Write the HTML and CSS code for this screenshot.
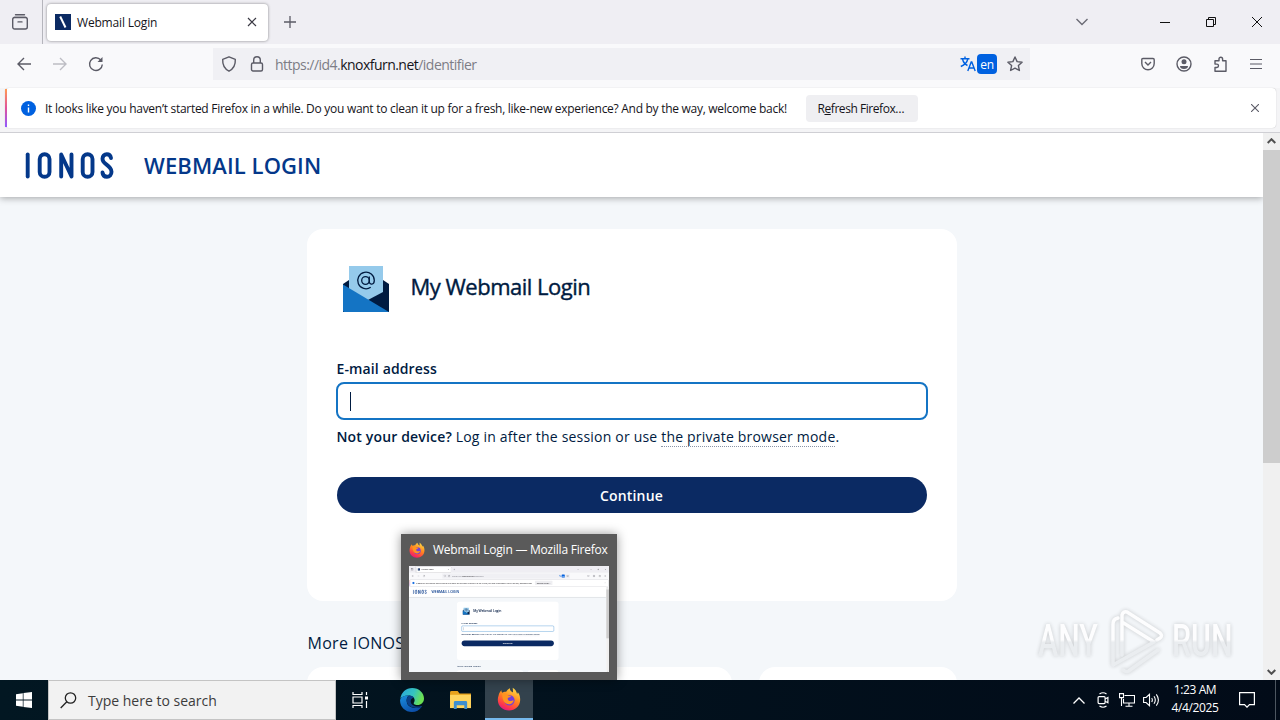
FILE: index.html
```html
<!DOCTYPE html>
<html lang="en">
<head>
  <meta charset="UTF-8">
  <meta name="viewport" content="width=device-width, initial-scale=1.0">
  <title>Webmail Login</title>
  <link rel="stylesheet" href="styles.css">
</head>
<body>
  <div class="browser" id="browser">
    <div class="tab-bar">
      <div class="firefox-view">
        <svg width="18" height="18" viewBox="0 0 18 18" fill="none" stroke="#5b5b66" stroke-width="1.4" stroke-linecap="round"><path d="M4.5 1.8h9M3 4.4h12"/><rect x="1.7" y="4.5" width="14.6" height="11.5" rx="2"/><path d="M7 8.9h4"/></svg>
      </div>
      <div class="tab">
        <svg class="favicon" width="16" height="16" viewBox="0 0 16 16"><rect width="16" height="16" fill="#0b2a63"/><path d="M5.2 2.5l5.3 11" stroke="#fff" stroke-width="2"/></svg>
        <span class="tab-title">Webmail Login</span>
        <svg width="10" height="10" viewBox="0 0 10 10" stroke="#3a3944" stroke-width="1.2"><path d="M1 1l8 8M9 1l-8 8"/></svg>
      </div>
      <svg class="new-tab" width="12" height="12" viewBox="0 0 12 12" stroke="#5b5b66" stroke-width="1.3"><path d="M6 0v12M0 6h12"/></svg>
      <div class="window-buttons">
        <svg width="12" height="8" viewBox="0 0 12 8" fill="none" stroke="#6b6b75" stroke-width="1.4"><path d="M.5 1l5.5 5.5L11.5 1"/></svg>
        <svg class="minimize" width="10" height="10" viewBox="0 0 10 10" stroke="#111"><path d="M0 5.5h10"/></svg>
        <svg class="restore" width="10" height="10" viewBox="0 0 10 10" fill="none" stroke="#111"><path d="M.5 2.5h7v7h-7zM2.5 2.5v-2h7v7h-2"/></svg>
        <svg width="10" height="10" viewBox="0 0 10 10" stroke="#111"><path d="M0 0l10 10M10 0L0 10"/></svg>
      </div>
    </div>

    <div class="nav-bar">
      <div class="nav-buttons">
        <svg width="16" height="16" viewBox="0 0 16 16" fill="none" stroke="#5b5b66" stroke-width="1.4"><path d="M15 8H2M8 2L2 8l6 6"/></svg>
        <svg width="16" height="16" viewBox="0 0 16 16" fill="none" stroke="#bdbdc4" stroke-width="1.4"><path d="M1 8h13M8 2l6 6-6 6"/></svg>
        <svg width="16" height="16" viewBox="0 0 16 16" fill="none" stroke="#5b5b66" stroke-width="1.4"><path d="M14.3 8.5A6.4 6.4 0 1 1 12.8 4"/><path d="M14.5 1v5h-5z" fill="#5b5b66" stroke="none"/></svg>
      </div>
      <div class="url-bar">
        <svg width="16" height="16" viewBox="0 0 16 16" fill="none" stroke="#5b5b66" stroke-width="1.4"><path d="M8 .8l6.3 2.5c.3 5-1.3 9.3-6.3 11.9C3 12.6 1.4 8.3 1.7 3.3z" stroke-linejoin="round"/></svg>
        <svg class="lock" width="14" height="16" viewBox="0 0 14 16" fill="none" stroke="#5b5b66" stroke-width="1.4"><rect x="1.5" y="7" width="11" height="8" rx="1.5"/><path d="M3.7 7V4a3.3 3.3 0 0 1 6.6 0v3"/></svg>
        <span class="url">https://id4.<b>knoxfurn.net</b>/identifier</span>
        <div class="translate">
          <svg width="16" height="16" viewBox="0 0 16 16" fill="none" stroke="#0061e0" stroke-width="1.4"><path d="M.5 2.7h9M5 .5v2M2.500 3c.8 3.5 3 5.5 5 6.500M7.800 3C7 6.500 4.500 9 .8 10.500M7.800 15l3.400-9h.6l3.400 9M9 12h5"/></svg>
          <span class="lang">en</span>
        </div>
        <svg width="16" height="16" viewBox="0 0 16 16" fill="none" stroke="#5b5b66" stroke-width="1.4" stroke-linejoin="round"><path d="M8 1l2.1 4.6 5 .6-3.700 3.400 1 4.900L8 12.100l-4.400 2.400 1-4.900L.9 6.200l5-.6z"/></svg>
      </div>
      <div class="toolbar-icons">
        <svg width="14" height="14" viewBox="0 0 14 14" fill="none" stroke="#5b5b66" stroke-width="1.4"><path d="M2 1.500h10q1.200 0 1.200 1.200V6.500a6.200 6.200 0 0 1-12.400 0V2.700Q.8 1.500 2 1.500zM4 5l3 3 3-3"/></svg>
        <svg width="16" height="16" viewBox="0 0 16 16" fill="none" stroke="#5b5b66" stroke-width="1.4"><circle cx="8" cy="8" r="7"/><circle cx="8" cy="5.8" r="2.5" fill="#5b5b66" stroke="none"/><path d="M4 10h8q0 3-4 3t-4-3z" fill="#5b5b66" stroke="none"/></svg>
        <svg width="16" height="16" viewBox="0 0 16 16" fill="none" stroke="#5b5b66" stroke-width="1.4" stroke-linejoin="round"><path d="M2 15.200V11.500h1.800a1.600 1.600 0 0 0 0-3.400H2V4.700h4V3a1.800 1.800 0 0 1 3.600 0v1.700H13v10.500z"/></svg>
        <svg width="12" height="12" viewBox="0 0 12 12" stroke="#5b5b66" stroke-width="1.2"><path d="M0 1.500h12M0 6h12M0 10.500h12"/></svg>
      </div>
    </div>

    <div class="notification-box">
      <div class="notification">
        <svg width="15" height="15" viewBox="0 0 15 15"><circle cx="7.5" cy="7.5" r="7.5" fill="#0061e0"/><path d="M7.5 3.5v1.500M7.500 6.500v5" stroke="#fff" stroke-width="1.4"/></svg>
        <span class="message">It looks like you haven’t started Firefox in a while. Do you want to clean it up for a fresh, like-new experience? And by the way, welcome back!</span>
        <button class="refresh">R<u>e</u>fresh Firefox…</button>
        <svg class="dismiss" width="8" height="8" viewBox="0 0 8 8" stroke="#5b5b66" stroke-width="1.1"><path d="M0 0l8 8M8 0L0 8"/></svg>
      </div>
    </div>

    <div class="viewport">
      <div class="page">
        <header class="page-header">
          <svg class="logo" width="91" height="30" viewBox="0 0 91 30" fill="none" stroke="#04388a" stroke-width="3.9" stroke-linecap="round" stroke-linejoin="round"><path d="M3.700 4.500v22"/><rect x="15.7" y="4.200" width="9.800" height="22.600" rx="4.900"/><path d="M37.200 26.500V4.500l10.300 22V4.500"/><rect x="58.700" y="4.200" width="9.800" height="22.600" rx="4.900"/><path d="M87 8c-.5-2.700-2-3.800-4.200-3.800-2.400 0-4.300 1.800-4.300 4.500 0 6 9 6.500 9 13 0 3-2 5.100-4.500 5.100s-4.300-1.500-4.500-4.300"/></svg>
          <span class="header-title">WEBMAIL LOGIN</span>
        </header>
        <main class="content">
          <section class="login-card">
            <div class="card-head">
              <svg width="46" height="46" viewBox="0 0 46 46"><path d="M0 18l6-4h34l6 4v28H0z" fill="#001b41"/><path d="M6 0h34v26L24 34.5 6 24z" fill="#95caeb"/><path d="M0 18.5L46 46H1.500Q0 46 0 44.500z" fill="#1474c4"/><g fill="none" stroke="#001b41" stroke-width="1.3"><circle cx="22.5" cy="14.5" r="3.8"/><path d="M26.3 10.5v5.200c0 3.500 5 3.200 5-1.200a8.300 8.300 0 1 0-3.600 6.800"/></g></svg>
              <h1>My Webmail Login</h1>
            </div>
            <label class="field-label">E-mail address</label>
            <div class="field"><span class="caret"></span></div>
            <p class="hint"><b>Not your device?</b> Log in after the session or use <span class="dotted">the private browser mode</span>.</p>
            <button class="continue">Continue</button>
          </section>
          <h2>More IONOS Logins</h2>
          <div class="more">
            <div class="more-card wide"></div>
            <div class="more-card"></div>
          </div>
        </main>
      </div>
      <div class="scrollbar">
        <svg width="9" height="6" viewBox="0 0 9 6" fill="none" stroke="#505050" stroke-width="2"><path d="M.7 5l3.800-3.800L8.300 5"/></svg>
        <div class="track"><div class="thumb"></div></div>
        <svg width="9" height="6" viewBox="0 0 9 6" fill="none" stroke="#505050" stroke-width="2"><path d="M.7 1l3.800 3.800L8.300 1"/></svg>
      </div>
    </div>
  </div>

  <div class="watermark">
    <span>ANY</span>
    <svg width="56" height="66" viewBox="0 0 56 66" fill="none" stroke="url(#wm)" stroke-width="3.4" stroke-linejoin="round" stroke-linecap="round">
      <defs><linearGradient id="wm" gradientUnits="userSpaceOnUse" x1="0" y1="0" x2="0" y2="66"><stop offset="0.48" stop-color="#fff"/><stop offset="0.52" stop-color="#e9ecef"/></linearGradient></defs>
      <path d="M10 10q-5 1-5 6v41L46 34 14 14v33M14 14V7q1-4 5-3l33 21q3 3 0 5l-3 2M15 62q4 3 7 0l28-20"/>
    </svg>
    <span>RUN</span>
  </div>

  <div class="task-preview">
    <div class="preview-title">
      <svg width="16" height="16" viewBox="0 0 30 30"><use href="#firefox"/></svg>
      <span>Webmail Login — Mozilla Firefox</span>
    </div>
    <div class="preview-window" id="preview"></div>
  </div>

  <div class="taskbar">
    <div class="start">
      <svg width="16" height="16" viewBox="0 0 16 16" fill="#fff"><path d="M0 2.200l6.800-1v6.400H0zM7.500 1.100L16 0v7.600H7.500zM0 8.400h6.800v6.400l-6.800-1zM7.500 8.400H16V16l-8.500-1.100z"/></svg>
    </div>
    <div class="search">
      <svg width="17" height="17" viewBox="0 0 17 17" fill="none" stroke="#222" stroke-width="1.3"><circle cx="10.500" cy="6" r="5.200"/><path d="M6.800 9.700L.7 16"/></svg>
      <span>Type here to search</span>
    </div>
    <div class="task task-view">
      <svg width="16" height="16" viewBox="0 0 16 16" fill="none" stroke="#fff" stroke-width="1.2"><path d="M1 0v2.500h9V0M1 16v-2.500h9V16M1 5h9v6H1zM14.500 0v3M14.500 9v7"/><path d="M13 4.500h3v3h-3z" fill="#fff" stroke="none"/></svg>
    </div>
    <div class="task">
      <svg width="24" height="24" viewBox="0 0 24 24">
        <defs>
          <linearGradient id="edge-top" x1="0" y1="0" x2="1" y2="0.3"><stop offset="0" stop-color="#2aa5e0"/><stop offset="0.6" stop-color="#35c4c0"/><stop offset="1" stop-color="#6be052"/></linearGradient>
          <linearGradient id="edge-bottom" x1="0" y1="0" x2="0.6" y2="1"><stop offset="0" stop-color="#1a8fe0"/><stop offset="1" stop-color="#0c4ea8"/></linearGradient>
        </defs>
        <path d="M.3 11C1 4.500 6 0 12.200 0 19 0 24 5 24 10.500c0 4-3 6.500-6.500 6.500-3 0-4.500-1.200-3.500-2.500 2-3-.5-7-5-7C4 7.500.8 9.500.3 11z" fill="url(#edge-top)"/>
        <path d="M.1 12C.8 9 4.500 7.300 9 7.500c-2 1.200-3 4-2 7.500 1.500 4.500 8 6.500 14.500 4C19.500 22 16 24 12 24 5 24-.3 18.500.1 12z" fill="url(#edge-bottom)"/>
        <path d="M9 7.600c-2 1.400-2.800 4-1.900 7.200 1.600 4.500 8 6.500 14.400 4.200.7-.4.400-1.300-.4-1-6 2-12-2-10.100-6.300.7-1.700 2.200-2 3-1.700-1-1.700-3-2.500-5-2.400z" fill="#0a3f87"/>
      </svg>
    </div>
    <div class="task">
      <svg width="21" height="19" viewBox="0 0 22 20"><path d="M0 1.500Q0 0 1.500 0H8l2 2.500h12V18H0z" fill="#e8a21c"/><path d="M0 4h22v14H0z" fill="#ffd45e"/><path d="M4 19v-7q0-1.500 1.500-1.500h11Q18 10.500 18 12v7h-3v-4H7v4z" fill="#3e8fd0"/></svg>
    </div>
    <div class="task active">
      <svg width="24" height="24" viewBox="0 0 30 30">
        <defs>
          <linearGradient id="ff-body" x1="0.8" y1="0" x2="0.3" y2="1"><stop offset="0" stop-color="#ffe14a"/><stop offset="0.45" stop-color="#ff8a1e"/><stop offset="0.8" stop-color="#ff3b47"/><stop offset="1" stop-color="#e31587"/></linearGradient>
        </defs>
        <g id="firefox">
          <path d="M2 10.500C2.500 7.500 4 5.500 5.500 4c0 1.500.3 2.500 1 3.200C8.500 6 10 5.800 11.500 6c1-2 2.500-3.500 4.500-4.500 0 3 2 4 4 5.500 0-3 0-4.500-.5-6C23 3 24.500 6 25 8.500c.8-.5 1-1 1-2 2.500 3 3 6.500 3 9.500 0 8-6.500 13.500-14 13.500S1 24 1 16c0-2 .4-4 1-5.500z" fill="url(#ff-body)"/>
          <circle cx="15.500" cy="16.500" r="6.500" fill="#7440d8"/>
          <path d="M6.500 8.500c3-1 6 0 7.500 2 1.500 0 3 .2 3.500.8-.5 1.500-3 2-4 2.500-.5 1.800.5 3.700 3 3.700 2 0 3-1 4.500-.5-1 3-3 4.500-6 4.500-5 0-8.500-4-8.500-13z" fill="#ff9420"/>
        </g>
      </svg>
    </div>
    <div class="tray">
      <div class="tray-icon">
        <svg width="12" height="7" viewBox="0 0 12 7" fill="none" stroke="#fff" stroke-width="1.3"><path d="M.5 6.500L6 1l5.500 5.500"/></svg>
      </div>
      <div class="tray-icon">
        <svg width="12" height="16" viewBox="0 0 12 16" fill="none" stroke="#fff" stroke-width="1.2"><rect x="1.100" y="4.600" width="7" height="7" rx="1"/><path d="M8.100 7l2.800-1.500v5.200L8.100 9.200M2.500 2q3.500-2.500 7 0M2.500 14q3.500 2.500 7 0"/></svg>
      </div>
      <div class="tray-icon">
        <svg width="16" height="14" viewBox="0 0 16 14" fill="none" stroke="#fff" stroke-width="1.1"><path d="M5.500 2.500h10v7.500h-11V6M10 10v3M6.500 13.200h7"/><path d="M.5.600h4v4h-4zM2.500 4.600V13"/></svg>
      </div>
      <div class="tray-icon">
        <svg width="17" height="14" viewBox="0 0 17 14" fill="none" stroke="#fff" stroke-width="1.1"><path d="M.6 4.500h2.500L6.500 1.300v11.400L3.100 9.500H.6zM8.700 5q1.300 2 0 4M11 3.200q2.600 3.800 0 7.600M13.300 1.300q4.200 5.700 0 11.400"/></svg>
      </div>
      <div class="clock">
        <span>1:23 AM</span>
        <span>4/4/2025</span>
      </div>
      <div class="action-center">
        <svg width="16" height="16" viewBox="0 0 16 16" fill="none" stroke="#fff" stroke-width="1.2"><path d="M.6.600h14.800v12H10.500L8 15.200 5.500 12.600H.6z"/></svg>
      </div>
      <div class="show-desktop"></div>
    </div>
  </div>

  <script>
    // the taskbar preview is a scaled copy of the browser window
    const copy = document.getElementById("browser").cloneNode(true);
    copy.removeAttribute("id");
    document.getElementById("preview").appendChild(copy);
  </script>
</body>
</html>
```
FILE: styles.css
```css
* {
  box-sizing: border-box;
}
body {
  margin: 0;
  width: 1280px;
  height: 720px;
  overflow: hidden;
  position: relative;
  font-family: "Open Sans", "Noto Sans", sans-serif;
  color: #001b41;
}
svg {
  display: block;
  flex: none;
}
button {
  border: 0;
  font-family: inherit;
}
.browser {
  width: 1280px;
  height: 680px;
  display: flex;
  flex-direction: column;
  background: #fff;
}

/* tabs */
.tab-bar {
  height: 44px;
  background: #efeef3;
  display: flex;
  align-items: center;
}
.firefox-view {
  width: 43px;
  height: 44px;
  padding: 13px 0 0 11px;
  border-right: 1px solid #b5b5bc;
}
.tab {
  width: 221px;
  height: 37px;
  margin: 0 0 0 4px;
  padding: 0 11px 0 8px;
  display: flex;
  align-items: center;
  background: #fff;
  border-radius: 4px;
  box-shadow: 0 0 3px rgba(0,0,0,0.45);
}
.tab-title {
  flex: 1;
  margin-left: 6px;
  font-size: 12px;
  letter-spacing: -0.18px;
  color: #15141a;
}
.new-tab {
  margin-left: 16px;
}
.window-buttons {
  margin-left: auto;
  padding-right: 18px;
  display: flex;
  align-items: center;
}
.minimize {
  margin-left: 72px;
}
.restore {
  margin: 0 36px;
}

/* navigation */
.nav-bar {
  height: 44px;
  background: #f9f9fb;
  display: flex;
  align-items: center;
  padding-bottom: 4px;
}
.nav-buttons {
  width: 213px;
  padding-left: 16px;
  display: flex;
  gap: 20px;
}
.url-bar {
  width: 817px;
  height: 32px;
  padding: 0 7px 0 8px;
  display: flex;
  align-items: center;
  background: #f0f0f4;
}
.lock {
  margin: 0 11px 0 13px;
}
.url {
  flex: 1;
  padding-top: 1px;
  font-size: 14px;
  letter-spacing: -0.53px;
  color: #7d7d86;
}
.url b {
  font-weight: normal;
  color: #15141a;
}
.translate {
  display: flex;
  align-items: center;
  gap: 1px;
  margin-right: 10px;
}
.lang {
  width: 20px;
  height: 20px;
  border-radius: 4px;
  background: #0061e0;
  color: #fff;
  font-size: 12px;
  line-height: 21px;
  letter-spacing: -0.4px;
  text-align: center;
}
.toolbar-icons {
  flex: 1;
  padding: 0 18px 0 111px;
  display: flex;
  align-items: center;
  justify-content: space-between;
}

/* refresh message */
.notification-box {
  height: 45px;
  padding: 0 4px 4px 5px;
  background: #f4f4f6;
  border-bottom: 1px solid #cfcfd4;
}
.notification {
  height: 40px;
  display: flex;
  align-items: center;
  padding: 0 16px 0 14px;
  background: #fff;
  border: 1px solid #e6e6ea;
  border-left: 2px solid;
  border-image: linear-gradient(#ff9a52, #e0529c, #9059ff) 0 0 0 2;
  border-radius: 4px;
  box-shadow: 0 0 1px rgba(0,0,0,0.3);
}
.message {
  margin-left: 9px;
  font-size: 12px;
  letter-spacing: -0.283px;
  color: #15141a;
  white-space: nowrap;
}
.refresh {
  width: 112px;
  height: 27px;
  margin-left: 19px;
  padding: 0 2px 0 0;
  border-radius: 4px;
  background: #efeff2;
  font-size: 12px;
  letter-spacing: -0.44px;
  color: #15141a;
}
.dismiss {
  margin-left: auto;
}

/* page */
.viewport {
  flex: 1;
  min-height: 0;
  display: flex;
}
.page {
  width: 1263px;
  overflow: hidden;
  background: #f4f7fa;
}
.page-header {
  position: relative;
  height: 64px;
  padding-left: 24px;
  display: flex;
  align-items: center;
  background: #fff;
  box-shadow: 0 1px 7px rgba(0,0,0,0.35);
}
.header-title {
  margin-left: 29px;
  font-size: 22px;
  font-weight: 600;
  letter-spacing: 0.1px;
  color: #04388a;
}
.content {
  width: 650px;
  margin: 32px auto 0;
}
.login-card {
  height: 372px;
  padding: 37px 30px 0;
  border-radius: 16px;
  background: #fff;
}
.card-head {
  display: flex;
  align-items: center;
  padding-left: 6px;
}
h1 {
  margin: 0 0 7px 22px;
  font-size: 22px;
  line-height: 30px;
  font-weight: 500;
  letter-spacing: -0.5px;
  -webkit-text-stroke: 0.4px #001b41;
}
.field-label {
  display: block;
  margin: 47px 0 3px;
  font-size: 14px;
  line-height: 20px;
  font-weight: 600;
  letter-spacing: 0.13px;
}
.field {
  height: 38px;
  margin: 0 -1px;
  padding: 8px 12px;
  border: 2px solid #1474c4;
  border-radius: 8px;
}
.caret {
  display: block;
  width: 1px;
  height: 19px;
  background: #001b41;
}
.hint {
  margin: 7px 0 0;
  font-size: 14px;
  line-height: 20px;
  letter-spacing: 0.2px;
  white-space: nowrap;
}
.hint b {
  font-weight: 600;
  letter-spacing: 0.16px;
}
.dotted {
  border-bottom: 1px dotted #8a94a6;
}
.continue {
  display: block;
  width: 100%;
  height: 36px;
  margin-top: 30px;
  border-radius: 18px;
  background: #0b2a63;
  color: #fff;
  font-size: 14px;
  font-weight: 600;
  letter-spacing: 0.15px;
}
h2 {
  margin: 30px 0 12px 1px;
  font-size: 16px;
  line-height: 24px;
  font-weight: 500;
  letter-spacing: 0.3px;
}
.more {
  display: flex;
  justify-content: space-between;
}
.more-card {
  width: 198px;
  height: 120px;
  border-radius: 16px;
  background: #fff;
}
.more-card.wide {
  width: 425px;
}
.scrollbar {
  width: 17px;
  padding: 5px 0;
  display: flex;
  flex-direction: column;
  align-items: center;
  background: #f0f0f0;
}
.track {
  flex: 1;
  width: 17px;
  padding-top: 6px;
}
.thumb {
  height: 313px;
  background: #cdcdcd;
}

/* overlays */
.watermark {
  position: absolute;
  left: 1038px;
  top: 608px;
  display: flex;
  align-items: center;
  gap: 8px;
  font-family: Roboto, sans-serif;
  font-size: 44px;
  font-weight: 500;
  line-height: 66px;
  opacity: 0.85;
  filter: drop-shadow(0 0 2px rgba(0,0,0,0.22));
}
.watermark span {
  box-sizing: content-box;
  width: 62px;
  margin-right: -30px;
  padding-right: 30px;
  transform: scaleX(0.69);
  transform-origin: left;
  background: linear-gradient(#fff 48%, #e9ecef 52%);
  -webkit-background-clip: text;
  background-clip: text;
  color: transparent;
  white-space: nowrap;
}
.task-preview {
  position: absolute;
  left: 401px;
  top: 534px;
  width: 216px;
  height: 146px;
  padding: 0 8px;
  background: #5a5a5a;
  box-shadow: 0 0 10px rgba(0,0,0,0.4);
}
.preview-title {
  height: 32px;
  padding-bottom: 1px;
  display: flex;
  align-items: center;
  gap: 8px;
  font-size: 12px;
  letter-spacing: -0.23px;
  white-space: nowrap;
  color: #fff;
}
.preview-window {
  width: 200px;
  height: 106px;
  overflow: hidden;
}
.preview-window .browser {
  transform: scale(0.15625);
  transform-origin: 0 0;
}

/* taskbar */
.taskbar {
  height: 40px;
  display: flex;
  background: linear-gradient(90deg, #021722, #020b18);
  color: #fff;
}
.start, .task {
  width: 48px;
  display: flex;
  align-items: center;
  justify-content: center;
}
.task {
  width: 49px;
}
.task.task-view {
  width: 51px;
  padding-right: 3px;
}
.search {
  width: 288px;
  padding-left: 11px;
  display: flex;
  align-items: center;
  gap: 11px;
  background: #f2f2f2;
  border: 1px solid #c4c4c4;
  color: #3c3c3c;
  font-size: 14px;
}
.task.active {
  width: 48px;
  background: #33424d;
  border-bottom: 2px solid #76b9ed;
}
.tray {
  margin-left: auto;
  display: flex;
}
.tray-icon {
  width: 24px;
  display: flex;
  align-items: center;
  justify-content: center;
}
.clock {
  width: 64px;
  padding-top: 1px;
  display: flex;
  flex-direction: column;
  align-items: center;
  font-size: 12px;
  line-height: 18px;
  letter-spacing: -0.4px;
  white-space: nowrap;
}
.action-center {
  width: 48px;
  padding-left: 12px;
  display: flex;
  align-items: center;
}
.show-desktop {
  width: 5px;
  border-left: 1px solid #4d5660;
}
```
